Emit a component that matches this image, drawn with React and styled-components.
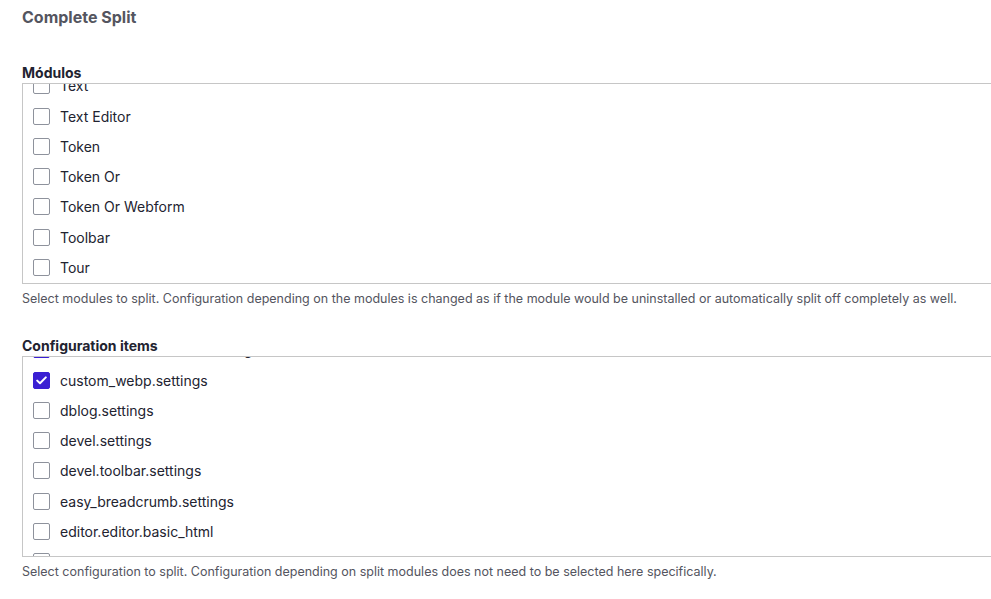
import { useEffect, useRef } from 'react'
import styled, { createGlobalStyle } from 'styled-components'

const GlobalStyle = createGlobalStyle`
  html, body {
    margin: 0;
    padding: 0;
    background: #fff;
    overflow: hidden;
  }
  body {
    font-family: Inter, "Noto Sans", "Liberation Sans", sans-serif;
    -webkit-font-smoothing: antialiased;
  }
`

const Page = styled.div`
  padding: 7px 0 0 22px;
`

const Title = styled.h2`
  margin: 0 0 36px;
  font-size: 16px;
  line-height: 20px;
  font-weight: 700;
  color: #545560;
`

const Field = styled.div`
  margin-bottom: 29px;
`

const Label = styled.div`
  font-size: 14px;
  line-height: 20px;
  font-weight: 700;
  color: #222330;
`

const ScrollBox = styled.div`
  box-sizing: border-box;
  width: 1010px;
  height: 201px;
  border: 1px solid #c6c6c6;
  overflow-y: auto;
  scrollbar-width: none;
  &::-webkit-scrollbar {
    display: none;
  }
`

const Item = styled.label`
  display: flex;
  align-items: center;
  gap: 10px;
  height: 30.3px;
  padding-left: 10px;
  font-size: 14px;
  color: #222330;
  cursor: pointer;
`

const Box = styled.span`
  box-sizing: border-box;
  display: inline-flex;
  align-items: center;
  justify-content: center;
  flex: none;
  width: 17px;
  height: 17px;
  border: 1px solid ${p => (p.$checked ? '#3a1fd3' : '#8e929c')};
  border-radius: 2px;
  background: ${p => (p.$checked ? '#3a1fd3' : '#fff')};
`

const Description = styled.div`
  margin-top: 7px;
  font-size: 12.5px;
  line-height: 16px;
  color: #545560;
`

function Checkbox({ checked, children }) {
  return (
    <Item>
      <Box $checked={checked}>
        {checked && (
          <svg width="11" height="9" viewBox="0 0 11 9" fill="none">
            <path d="M1.2 4.6 4 7.3 9.8 1.4" stroke="#fff" strokeWidth="2" strokeLinecap="round" strokeLinejoin="round" />
          </svg>
        )}
      </Box>
      {children}
    </Item>
  )
}

function CheckList({ items, offset }) {
  const ref = useRef(null)
  useEffect(() => {
    if (ref.current) ref.current.scrollTop = offset
  }, [offset])
  return (
    <ScrollBox ref={ref}>
      {items.map(it => (
        <Checkbox key={it.name} checked={it.checked}>{it.name}</Checkbox>
      ))}
    </ScrollBox>
  )
}

const modules = [
  'Taxonomy', 'Telephone', 'Text', 'Text Editor', 'Token', 'Token Or',
  'Token Or Webform', 'Toolbar', 'Tour', 'Update Manager', 'User', 'Views', 'Views UI',
].map(name => ({ name }))

const configItems = [
  { name: 'contact.settings' },
  { name: 'core.extension' },
  { name: 'custom_breadcrumbs.settings', checked: true },
  { name: 'custom_webp.settings', checked: true },
  { name: 'dblog.settings' },
  { name: 'devel.settings' },
  { name: 'devel.toolbar.settings' },
  { name: 'easy_breadcrumb.settings' },
  { name: 'editor.editor.basic_html' },
  { name: 'editor.editor.full_html' },
  { name: 'field.settings' },
]

export default function App() {
  return (
    <>
      <GlobalStyle />
      <Page>
        <Title>Complete Split</Title>
        <Field>
          <Label>Módulos</Label>
          <CheckList items={modules} offset={2 * 30.3 + 13.6} />
          <Description>
            Select modules to split. Configuration depending on the modules is changed as if the module would be uninstalled or automatically split off completely as well.
          </Description>
        </Field>
        <Field>
          <Label>Configuration items</Label>
          <CheckList items={configItems} offset={83} />
          <Description>
            Select configuration to split. Configuration depending on split modules does not need to be selected here specifically.
          </Description>
        </Field>
      </Page>
    </>
  )
}
